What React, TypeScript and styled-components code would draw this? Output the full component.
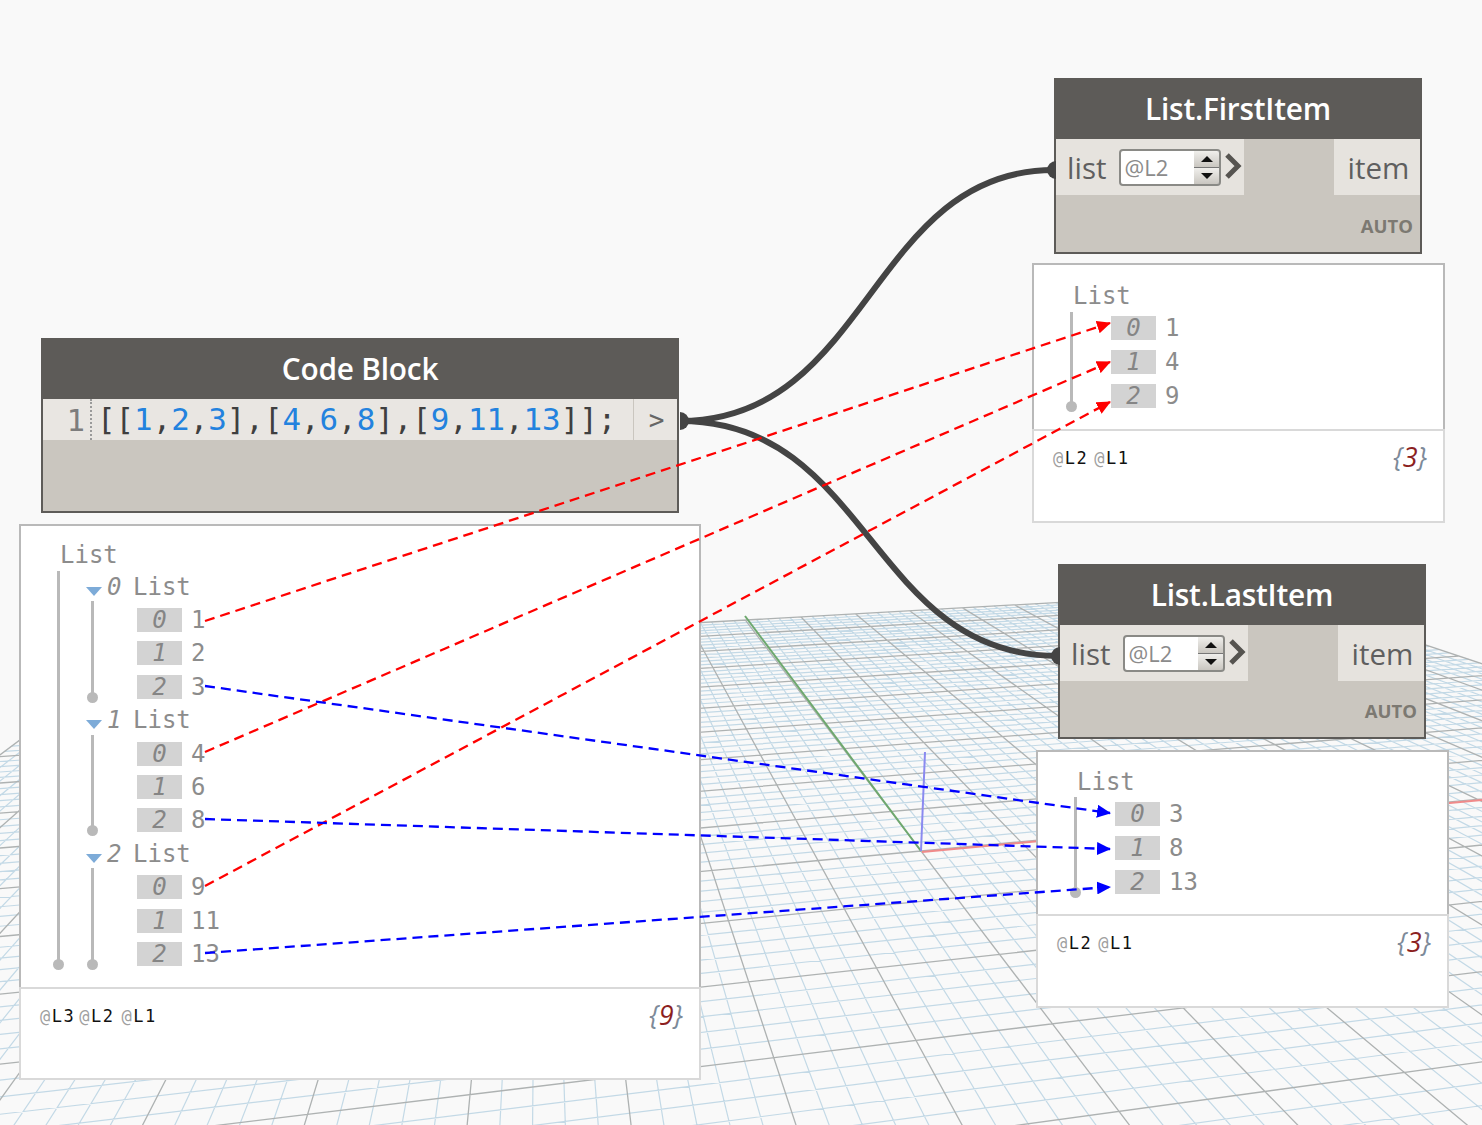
import styled, { createGlobalStyle } from 'styled-components';

const GlobalStyle = createGlobalStyle`
    body {
        margin: 0;
        background: #f9f9f9;
    }
`

// ground plane: origin + the two vanishing points measured off the picture
const ORIGIN = [921, 851];
const VP_U = [7500, 240];
const VP_V = [540, 350];
const A = 0.0154;
const B = 0.0855;

function project(u: number, v: number) {
    const w = 1 + A * u + B * v;
    return [
        (ORIGIN[0] + A * u * VP_U[0] + B * v * VP_V[0]) / w,
        (ORIGIN[1] + A * u * VP_U[1] + B * v * VP_V[1]) / w,
    ];
}

// cuts a world segment where it goes behind the camera
function gridLine(u1: number, v1: number, u2: number, v2: number) {
    const w1 = 1 + A * u1 + B * v1;
    const w2 = 1 + A * u2 + B * v2;
    const min = 0.06;
    if (w1 < min && w2 < min) return "";
    let start = [u1, v1];
    let end = [u2, v2];
    if (w1 < min) {
        const t = (min - w1) / (w2 - w1);
        start = [u1 + (u2 - u1) * t, v1 + (v2 - v1) * t];
    }
    if (w2 < min) {
        const t = (min - w1) / (w2 - w1);
        end = [u1 + (u2 - u1) * t, v1 + (v2 - v1) * t];
    }
    const p = project(start[0], start[1]);
    const q = project(end[0], end[1]);
    return `M${p[0].toFixed(1)} ${p[1].toFixed(1)}L${q[0].toFixed(1)} ${q[1].toFixed(1)}`;
}

function buildGrid() {
    let minor = "";
    let major = "";
    for (let i = -50; i <= 50; i++) {
        const t = i / 5;
        const d = gridLine(t, -10, t, 10) + gridLine(-10, t, 10, t);
        if (i % 5 === 0) major += d;
        else minor += d;
    }
    return { minor, major };
}

const Canvas = styled.div`
    position: relative;
    width: 1482px;
    height: 1125px;
    overflow: hidden;
    background: #f9f9f9;
`
const Layer = styled.svg`
    position: absolute;
    left: 0;
    top: 0;
    pointer-events: none;
`

const Node = styled.div<{ $x: number, $y: number, $w: number, $h: number }>`
    position: absolute;
    left: ${(p) => p.$x}px;
    top: ${(p) => p.$y}px;
    width: ${(p) => p.$w}px;
    height: ${(p) => p.$h}px;
    box-sizing: border-box;
    display: flex;
    flex-direction: column;
    background: #cac6bf;
    border: 2px solid #5d5b58;
    border-top: 0;
`
const NodeTitle = styled.div`
    height: 61px;
    flex: none;
    display: flex;
    align-items: center;
    justify-content: center;
    background: #5d5b58;
    color: #fff;
    font: 600 29.8px "Open Sans", sans-serif;
    letter-spacing: -0.2px;
`
const PortRow = styled.div`
    display: flex;
    justify-content: space-between;
    height: 56px;
    flex: none;
`
const Port = styled.div`
    display: flex;
    align-items: center;
    background: #e6e3de;
    color: #5f5f5f;
    font: 400 29.5px "Open Sans", sans-serif;
`
const InPort = styled(Port)`
    width: 188px;
    padding-left: 11px;
    box-sizing: border-box;
    position: relative;
`
const OutPort = styled(Port)`
    width: 86px;
    padding-left: 3px;
    box-sizing: border-box;
    justify-content: center;
`
const Stepper = styled.div`
    display: flex;
    margin-left: 13px;
    width: 102px;
    height: 37px;
    box-sizing: border-box;
    border: 2px solid #8a8a86;
    border-radius: 4px;
    background: #fff;
    overflow: hidden;
`
const StepperText = styled.div`
    flex: 1;
    padding-left: 3px;
    color: #8b8b8b;
    font: 400 22px/33px "Open Sans", sans-serif;
`
const StepperButtons = styled.div`
    width: 25px;
    display: flex;
    flex-direction: column;
    gap: 1px;
    background: #777;
`
const StepButton = styled.div<{ $up?: boolean }>`
    flex: 1;
    display: flex;
    align-items: center;
    justify-content: center;
    background: linear-gradient(#f0efec, #c9c6c0);
    &::before {
        content: "";
        border-left: 6px solid transparent;
        border-right: 6px solid transparent;
        ${(p) => p.$up ? "border-bottom: 6px solid #111;" : "border-top: 6px solid #111;"}
    }
`
const Chevron = styled.svg`
    margin-left: 2px;
    margin-top: -3px;
`
const AutoMark = styled.div`
    margin-top: auto;
    padding: 0 7px 14px 0;
    text-align: right;
    color: #7c7972;
    font: 700 18.5px "Open Sans", sans-serif;
`

const CodeRow = styled.div`
    display: flex;
    height: 41px;
    flex: none;
    gap: 1px;
`
const Editor = styled.div`
    width: 590px;
    display: flex;
    align-items: center;
    background: #e9e6e2;
    font: 400 30.8px "DejaVu Sans Mono", monospace;
    color: #3f3f3f;
`
const LineNumber = styled.div`
    width: 49px;
    height: 100%;
    box-sizing: border-box;
    padding-right: 5px;
    display: flex;
    align-items: center;
    justify-content: flex-end;
    border-right: 2px dotted #9a9a9a;
    color: #7d7d7d;
`
const Code = styled.div`
    padding-left: 5px;
    white-space: pre;
    line-height: 41px;
`
const Num = styled.span`
    color: #2382de;
`
const RunButton = styled.div`
    flex: 1;
    display: flex;
    align-items: center;
    justify-content: center;
    padding-left: 2px;
    background: #e9e6e2;
    color: #666;
    font: 400 26px "DejaVu Sans Mono", monospace;
`

const Panel = styled.div<{ $x: number, $y: number, $w: number }>`
    position: absolute;
    left: ${(p) => p.$x}px;
    top: ${(p) => p.$y}px;
    width: ${(p) => p.$w}px;
    background: #fff;
`
const ListArea = styled.div<{ $h: number }>`
    height: ${(p) => p.$h}px;
    box-sizing: border-box;
    border: 2px solid #b9b9b9;
    border-bottom: 0;
`
const Tree = styled.div<{ $row: number, $indent: number, $top: number, $guideTop: number, $guideBottom: number }>`
    --row: ${(p) => p.$row}px;
    position: relative;
    padding: ${(p) => p.$top}px 0 0 ${(p) => p.$indent}px;
    font: 400 24px "DejaVu Sans Mono", monospace;
    color: #8c8c8c;
    &::before {
        content: "";
        position: absolute;
        left: ${(p) => p.$indent - 3}px;
        top: ${(p) => p.$guideTop}px;
        bottom: ${(p) => p.$guideBottom}px;
        width: 3px;
        background: #b9b9b9;
    }
    &::after {
        content: "";
        position: absolute;
        left: ${(p) => p.$indent - 7}px;
        bottom: ${(p) => p.$guideBottom - 6}px;
        width: 11px;
        height: 11px;
        border-radius: 50%;
        background: #b9b9b9;
    }
`
const Row = styled.div`
    height: var(--row);
    display: flex;
    align-items: center;
`
const TitleRow = styled(Row) <{ $h: number }>`
    height: ${(p) => p.$h}px;
`
const Branch = styled.div`
    position: relative;
    &::before {
        content: "";
        position: absolute;
        left: 31px;
        top: 31px;
        bottom: 7px;
        width: 3px;
        background: #b9b9b9;
    }
    &::after {
        content: "";
        position: absolute;
        left: 27px;
        bottom: 1px;
        width: 11px;
        height: 11px;
        border-radius: 50%;
        background: #b9b9b9;
    }
`
const Caret = styled.span`
    margin-left: 26px;
    margin-top: 9px;
    width: 0;
    height: 0;
    border-left: 8px solid transparent;
    border-right: 8px solid transparent;
    border-top: 9px solid #7dabd8;
`
const BranchIndex = styled.span`
    margin-left: 5px;
    width: 26px;
    font-style: italic;
`
const Item = styled.span<{ $indent: number }>`
    margin-left: ${(p) => p.$indent}px;
    width: 45px;
    height: 24px;
    margin-right: 9px;
    display: flex;
    align-items: center;
    justify-content: center;
    background: #d3d3d3;
    color: #858585;
    font-style: italic;
`
const Footer = styled.div<{ $h: number }>`
    height: ${(p) => p.$h}px;
    box-sizing: border-box;
    border: 2.5px solid #d9d9d9;
    padding: 7px 14px 0 19px;
    display: flex;
    justify-content: space-between;
    align-items: flex-start;
`
const Levels = styled.div`
    display: flex;
    margin-top: 10px;
    font: 400 17px "DejaVu Sans Mono", monospace;
    letter-spacing: 1.5px;
    color: #111;
`
const Level = styled.span<{ $gap: number }>`
    margin-right: ${(p) => p.$gap}px;
    & > i {
        font-style: normal;
        color: #a0a0a0;
    }
`
const Count = styled.div`
    margin-right: 2px;
    font: italic 400 27px "Open Sans", sans-serif;
    color: #7d8a99;
    & > b {
        font-weight: 400;
        color: #8c1f1f;
    }
`

interface ListOutputProps {
    x: number;
    y: number;
    values: number[];
    areaHeight: number;
    footHeight: number;
    top: number;
    guideTop: number;
}

function FlatList({ x, y, values, areaHeight, footHeight, top, guideTop }: ListOutputProps) {
    return (
        <Panel $x={x} $y={y} $w={413}>
            <ListArea $h={areaHeight}>
                <Tree $row={34} $indent={39} $top={top} $guideTop={guideTop} $guideBottom={7}>
                    <TitleRow $h={31}>List</TitleRow>
                    {values.map((value, index) => (
                        <Row key={index}>
                            <Item $indent={38}>{index}</Item>
                            {value}
                        </Row>
                    ))}
                </Tree>
            </ListArea>
            <Footer $h={footHeight}>
                <Levels>
                    <Level $gap={6}><i>@</i>L2</Level>
                    <Level $gap={0}><i>@</i>L1</Level>
                </Levels>
                <Count>{"{"}<b>3</b>{"}"}</Count>
            </Footer>
        </Panel>
    )
}

function ListNode({ x, y, h, title }: { x: number, y: number, h: number, title: string }) {
    return (
        <Node $x={x} $y={y} $w={368} $h={h}>
            <NodeTitle>{title}</NodeTitle>
            <PortRow>
                <InPort>
                    list
                    <Stepper>
                        <StepperText>@L2</StepperText>
                        <StepperButtons>
                            <StepButton $up />
                            <StepButton />
                        </StepperButtons>
                    </Stepper>
                    <Chevron width="20" height="30" viewBox="0 0 20 30">
                        <polyline points="4,4 15,15 4,26" fill="none" stroke="#565450" strokeWidth="5" />
                    </Chevron>
                </InPort>
                <OutPort>item</OutPort>
            </PortRow>
            <AutoMark>AUTO</AutoMark>
        </Node>
    )
}

const NESTED = [
    [1, 2, 3],
    [4, 6, 8],
    [9, 11, 13],
];

const RED = [
    [205, 621, 1110, 323],
    [205, 752, 1110, 362],
    [205, 886, 1110, 402],
];
const BLUE = [
    [205, 686, 1110, 813],
    [205, 819, 1110, 849],
    [205, 953, 1110, 887],
];

function App() {
    const grid = buildGrid();
    return (
        <Canvas>
            <GlobalStyle />
            <Layer width="1482" height="1125">
                <path d={grid.minor} stroke="#c3d9e6" strokeWidth="1.2" fill="none" />
                <path d={grid.major} stroke="#aeb2b2" strokeWidth="1.3" fill="none" />
                <line x1="745" y1="616" x2="921" y2="851" stroke="#6ea86e" strokeWidth="2" />
                <line x1="922" y1="852" x2="1482" y2="800" stroke="#f08a8a" strokeWidth="2" />
                <line x1="921" y1="851" x2="925" y2="752" stroke="#8a8af0" strokeWidth="2" />
            </Layer>

            <Node $x={41} $y={338} $w={638} $h={175}>
                <NodeTitle>Code Block</NodeTitle>
                <CodeRow>
                    <Editor>
                        <LineNumber>1</LineNumber>
                        <Code>
                            [[<Num>1</Num>,<Num>2</Num>,<Num>3</Num>],[<Num>4</Num>,<Num>6</Num>,<Num>8</Num>],[<Num>9</Num>,<Num>11</Num>,<Num>13</Num>]];
                        </Code>
                    </Editor>
                    <RunButton>&gt;</RunButton>
                </CodeRow>
            </Node>

            <Panel $x={19} $y={524} $w={682}>
                <ListArea $h={463}>
                    <Tree $row={33.4} $indent={39} $top={14} $guideTop={45} $guideBottom={7}>
                        <TitleRow $h={30}>List</TitleRow>
                        {NESTED.map((values, i) => (
                            <Branch key={i}>
                                <Row>
                                    <Caret />
                                    <BranchIndex>{i}</BranchIndex>
                                    List
                                </Row>
                                {values.map((value, k) => (
                                    <Row key={k}>
                                        <Item $indent={77}>{k}</Item>
                                        {value}
                                    </Row>
                                ))}
                            </Branch>
                        ))}
                    </Tree>
                </ListArea>
                <Footer $h={93}>
                    <Levels>
                        <Level $gap={4}><i>@</i>L3</Level>
                        <Level $gap={7}><i>@</i>L2</Level>
                        <Level $gap={0}><i>@</i>L1</Level>
                    </Levels>
                    <Count>{"{"}<b>9</b>{"}"}</Count>
                </Footer>
            </Panel>

            <ListNode x={1054} y={78} h={176} title="List.FirstItem" />
            <FlatList x={1032} y={263} values={[1, 4, 9]} areaHeight={166} footHeight={94} top={15} guideTop={47} />
            <ListNode x={1058} y={564} h={175} title="List.LastItem" />
            <FlatList x={1036} y={750} values={[3, 8, 13]} areaHeight={164} footHeight={94} top={14} guideTop={45} />

            <Layer width="1482" height="1125">
                <defs>
                    <marker id="red-head" markerWidth="14" markerHeight="13" refX="13" refY="6.5" orient="auto" markerUnits="userSpaceOnUse">
                        <path d="M0 0L14 6.5L0 13Z" fill="#f00" />
                    </marker>
                    <marker id="blue-head" markerWidth="14" markerHeight="13" refX="13" refY="6.5" orient="auto" markerUnits="userSpaceOnUse">
                        <path d="M0 0L14 6.5L0 13Z" fill="#00f" />
                    </marker>
                </defs>
                <g fill="none" stroke="#444" strokeWidth="6">
                    <path d="M680 421C870 421 870 170 1054 170" />
                    <path d="M680 421C870 421 870 656 1058 656" />
                </g>
                <g fill="#444">
                    <path d="M680 412A9 9 0 0 1 680 430Z" />
                    <path d="M1056 161A9 9 0 0 0 1056 179Z" />
                    <path d="M1060 647A9 9 0 0 0 1060 665Z" />
                </g>
                {RED.map((l, i) => (
                    <line key={i} x1={l[0]} y1={l[1]} x2={l[2]} y2={l[3]} stroke="#f00" strokeWidth="2.3" strokeDasharray="10 6" markerEnd="url(#red-head)" />
                ))}
                {BLUE.map((l, i) => (
                    <line key={i} x1={l[0]} y1={l[1]} x2={l[2]} y2={l[3]} stroke="#00f" strokeWidth="2.3" strokeDasharray="10 6" markerEnd="url(#blue-head)" />
                ))}
            </Layer>
        </Canvas>
    )
}

export default App;
